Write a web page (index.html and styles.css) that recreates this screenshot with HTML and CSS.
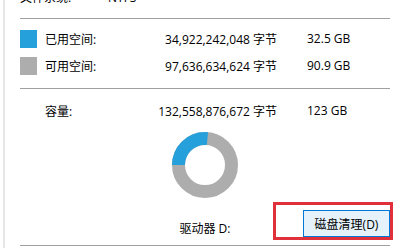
FILE: index.html
```html
<!DOCTYPE html>
<html lang="zh-CN">
<head>
<meta charset="utf-8">
<link rel="stylesheet" href="styles.css">
</head>
<body>
<div class="page">
  <div class="fs"><span class="fs-label">文件系统:</span><span class="fs-value">NTFS</span></div>
  <div class="sep sep-1"></div>
  <div class="rows">
    <div class="row">
      <span class="swatch swatch-used"></span>
      <span class="label">已用空间:</span>
      <span class="bytes">34,922,242,048 字节</span>
      <span class="gb">32.5 GB</span>
    </div>
    <div class="row">
      <span class="swatch swatch-free"></span>
      <span class="label">可用空间:</span>
      <span class="bytes">97,636,634,624 字节</span>
      <span class="gb">90.9 GB</span>
    </div>
  </div>
  <div class="sep sep-2"></div>
  <div class="row row-cap">
    <span class="swatch-none"></span>
    <span class="label">容量:</span>
    <span class="bytes">132,558,876,672 字节</span>
    <span class="gb">123 GB</span>
  </div>
  <div class="chart">
    <svg class="donut" width="66" height="66" viewBox="0 0 66 66">
      <circle cx="33" cy="33" r="26.5" fill="none" stroke="#adadad" stroke-width="13"/>
      <circle cx="33" cy="33" r="26.5" fill="none" stroke="#26a0da" stroke-width="13" stroke-dasharray="43.9 200" transform="rotate(-180 33 33)"/>
    </svg>
  </div>
  <div class="drive-row">
    <span></span>
    <span class="drive">驱动器 D:</span>
    <div class="btn-cell">
      <button class="btn">磁盘清理(D)</button>
      <div class="highlight"></div>
    </div>
  </div>
  <div class="sep sep-3"></div>
</div>
</body>
</html>
```

FILE: styles.css
```css
html, body {
  margin: 0;
  padding: 0;
  background: #ffffff;
}
body {
  width: 393px;
  height: 248px;
  overflow: hidden;
  font-family: "Open Sans", "Noto Sans CJK SC", sans-serif;
  font-size: 12px;
  color: #000;
}
.page {
  margin-left: 3px;
  border-left: 2px solid #e6e6e6;
  padding-left: 15px;
  padding-right: 3px;
  height: 260px;
}
.fs {
  display: flex;
  height: 16px;
  line-height: 16px;
  margin-top: -10px;
}
.fs-label { width: 88px; }
.sep {
  height: 1px;
  background: #a0a0a0;
}
.sep-1 { margin-top: 12px; }
.rows { margin-top: 6px; }
.row {
  display: grid;
  grid-template-columns: 25px 100px 132px 1fr;
  align-items: center;
  height: 27px;
}
.swatch {
  width: 17px;
  height: 18px;
}
.swatch-used { background: #26a0da; }
.swatch-free { background: #adadad; }
.bytes { text-align: right; }
.gb { padding-left: 30px; }
.sep-2 { margin-top: 9px; }
.row-cap { margin-top: 8px; }
.chart {
  display: flex;
  justify-content: center;
  margin-top: 8px;
}
.donut { display: block; }
.drive-row {
  display: grid;
  grid-template-columns: 1fr auto 1fr;
  height: 27px;
  margin-top: 12px;
}
.drive {
  align-self: end;
  line-height: 16px;
}
.btn-cell {
  position: relative;
  display: flex;
  justify-content: flex-end;
}
.btn {
  width: 87px;
  height: 27px;
  margin: 0;
  padding: 0;
  border: 1px solid #0078d7;
  background: #e5f1fb;
  font-family: "Open Sans", "Noto Sans CJK SC", sans-serif;
  font-size: 12px;
  color: #000;
}
.highlight {
  position: absolute;
  top: -8px;
  right: -3px;
  width: 120px;
  height: 38px;
  box-sizing: border-box;
  border: 3px solid #e0303a;
}
.sep-3 { margin-top: 8px; }
```
